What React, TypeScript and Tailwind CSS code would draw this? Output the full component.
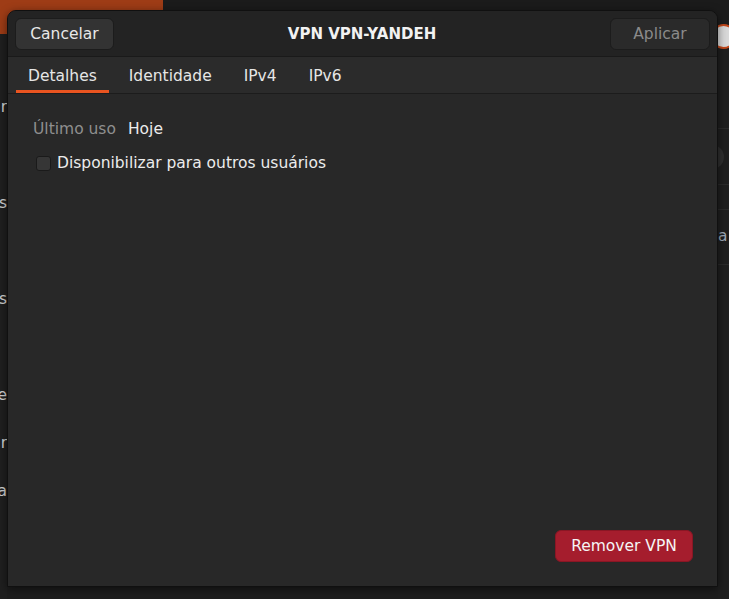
// Diálogo de VPN (GNOME Settings) sobre a janela de fundo.

const tabs = ["Detalhes", "Identidade", "IPv4", "IPv6"];

// fragmentos de texto da janela de trás (só a ponta aparece)
const leftBits = ["r", "", "es", "", "as", "", "e", "r", "a"];

function BackgroundWindow() {
  return (
    <div className="absolute inset-0 flex flex-col">
      <div className="h-[34px] shrink-0 flex">
        <div className="w-[163px] bg-[#9e3c16]" />
        <div className="flex-1 flex flex-col">
          <div className="h-[20px] bg-[#1b1b1b]" />
        </div>
      </div>
      <div className="flex-1 flex justify-between">
        {/* barra lateral */}
        <div className="w-[7px] bg-[#1f1f1f] flex flex-col pt-[50px] overflow-hidden">
          {leftBits.map((b, i) => (
            <div key={i} className="h-[48px] shrink-0 flex items-center justify-end text-[15.5px] text-[#cfcfcf]">
              <span className="whitespace-nowrap">{b}</span>
            </div>
          ))}
        </div>
        {/* painel à direita */}
        <div className="w-[11px] bg-[#1e1e1e] flex flex-col pt-[94px] overflow-hidden">
          <div className="h-[56px] shrink-0 border-t border-[#2a2a2a] flex items-center">
            <div className="w-[24px] h-[24px] -ml-[18px] rounded-full bg-[#2e2e2e] shrink-0" />
          </div>
          <div className="h-[25px] shrink-0 border-t border-[#2a2a2a]" />
          <div className="h-[56px] shrink-0 border-y border-[#2a2a2a] flex items-center text-[15.5px] text-[#9aa6b4]">
            a
          </div>
        </div>
      </div>
      {/* interruptor da janela de trás, parcialmente visível */}
      <div className="absolute left-[711px] top-[24px] w-[25px] h-[25px] rounded-full bg-[#d8d8d8] border-2 border-[#c2471a]" />
    </div>
  );
}

export default function App() {
  return (
    <div
      className="relative w-[729px] h-[599px] overflow-hidden bg-[#1d1d1d]"
      style={{ fontFamily: '"DejaVu Sans", "Noto Sans", sans-serif' }}
    >
      <BackgroundWindow />

      <div className="absolute left-[7px] top-[10px] w-[711px] h-[577px] flex flex-col rounded-t-[9px] border border-[#101010] bg-[#282828] overflow-hidden shadow-[0_2px_8px_rgba(0,0,0,0.5)]">
        {/* cabeçalho */}
        <div className="h-[46px] shrink-0 flex items-center justify-between px-[7px] bg-[#232323] border-b border-[#1a1a1a]">
          <button className="h-[32px] w-[99px] pt-[2px] rounded-[6px] border border-[#1c1c1c] bg-[#333333] text-[15.5px] text-[#e8e8e8]">
            Cancelar
          </button>
          <h1 className="pt-[2px] text-[15px] font-bold text-[#f2f2f2]">VPN VPN-YANDEH</h1>
          <button className="h-[32px] w-[100px] pt-[2px] rounded-[6px] border border-[#1c1c1c] bg-[#2a2a2a] text-[15.5px] text-[#8b8b8b]">
            Aplicar
          </button>
        </div>

        {/* abas */}
        <div className="h-[37px] shrink-0 flex gap-2 px-2 bg-[#2b2b2b] border-b border-[#1c1c1c]">
          {tabs.map((t, i) => (
            <div
              key={t}
              className={
                "px-3 pt-[7px] flex items-center text-[15.5px] text-[#e6e6e6] border-b-[3px] " +
                (i === 0 ? "border-[#e95420]" : "border-transparent")
              }
            >
              {t}
            </div>
          ))}
        </div>

        {/* conteúdo */}
        <div className="flex-1 flex flex-col pt-[25px] pl-[25px] pr-6 pb-6">
          <div className="flex items-center gap-[12px] text-[15.5px] h-[22px]">
            <span className="text-[#8f8f8f]">Último uso</span>
            <span className="text-[#ececec]">Hoje</span>
          </div>
          <label className="mt-[12px] ml-[3px] flex items-center gap-[6px] h-[22px] text-[15.5px] text-[#ececec]">
            <span className="w-[15px] h-[15px] -mt-px rounded-[3px] border border-[#1a1a1a] bg-[#363636]" />
            Disponibilizar para outros usuários
          </label>

          <div className="mt-auto flex justify-end">
            <button className="h-[32px] w-[138px] pt-[2px] rounded-[6px] border border-[#8a1624] bg-[#a51d2d] text-[15.5px] text-[#f5f5f5]">
              Remover VPN
            </button>
          </div>
        </div>
      </div>
    </div>
  );
}
